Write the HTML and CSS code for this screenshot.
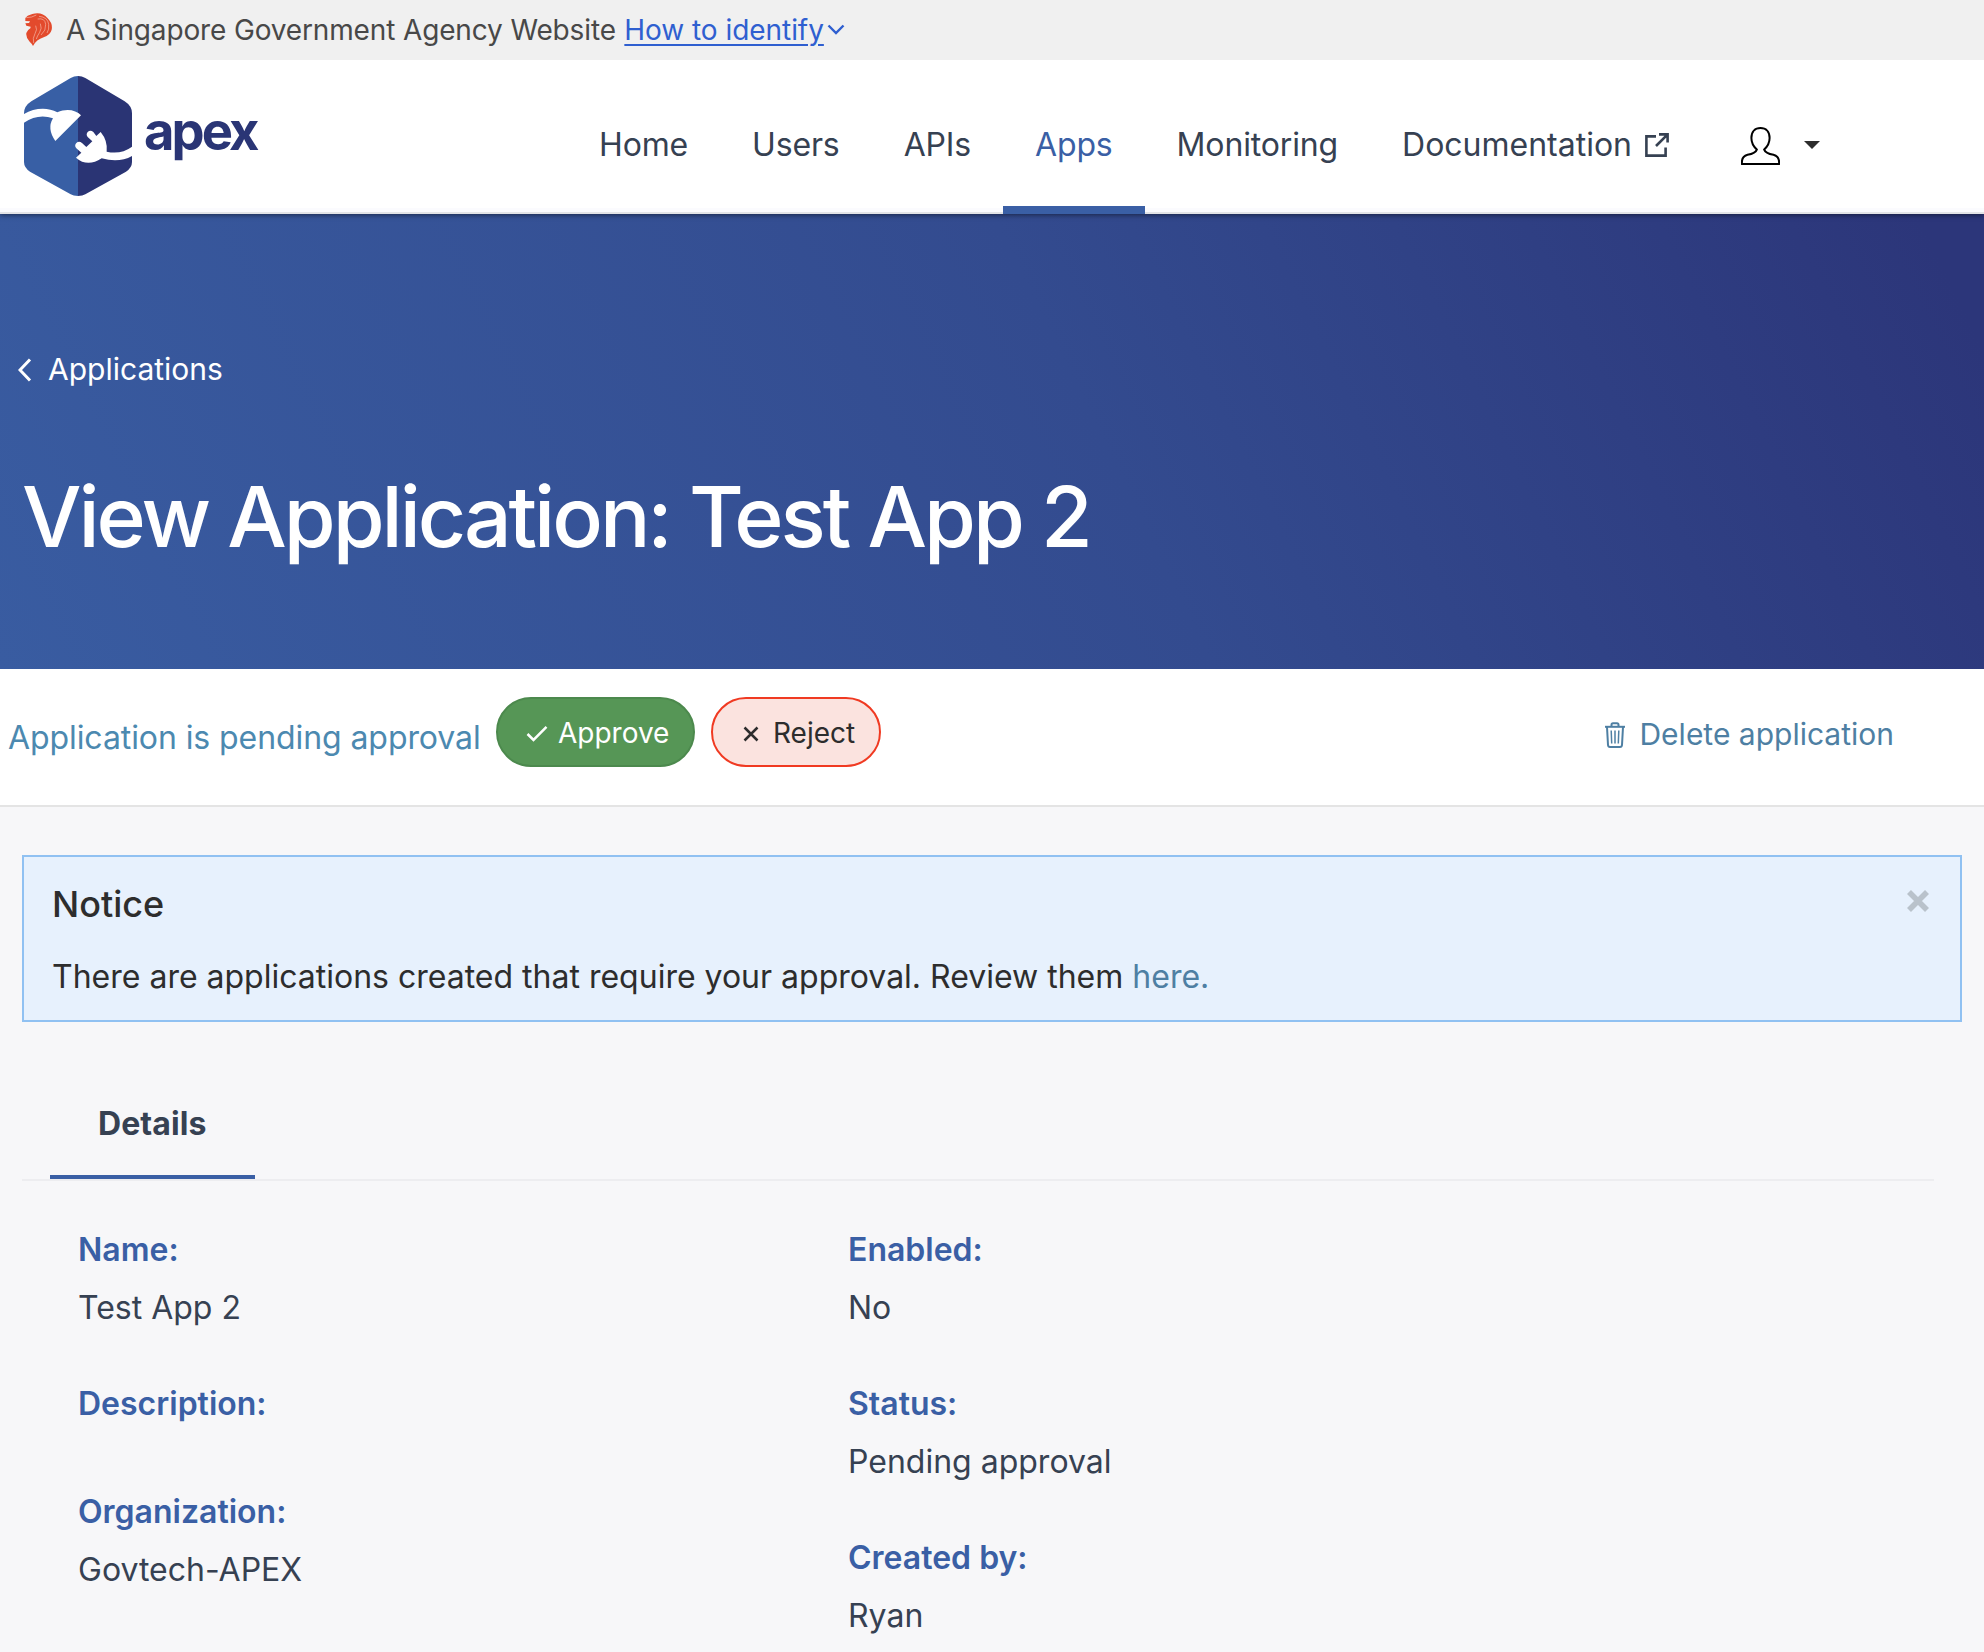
FILE: index.html
```html
<!DOCTYPE html>
<html lang="en">
<head>
<meta charset="utf-8">
<title>View Application: Test App 2</title>
<link rel="stylesheet" href="styles.css">
</head>
<body>
<div class="gov-banner">
  <svg class="lion" viewBox="0 0 81 99" aria-hidden="true">
    <path fill="#e34a2c" d="M8 8 L22 3 Q50 -5 68 16 Q84 32 80 50 Q76 66 56 73 Q34 80 24 99 Q21 92 14 86 Q2 74 4 60 Q6 52 16 46 L17 41 L4 38 L1 31 L12 30 L15 25 L1 24 L1 15Z"/>
    <g fill="none" stroke="#f6c6ba" stroke-width="1.8">
      <path d="M4 14 L20 12 L34 6 M32 38 Q38 50 30 62 Q22 76 26 90 M46 32 Q52 46 44 58 Q36 70 34 78 M38 18 Q60 14 62 34 Q64 52 48 66 M42 10 Q68 12 71 34 Q73 50 66 60"/>
    </g>
  </svg>
  <span class="gov-text">A Singapore Government Agency Website</span>
  <a class="gov-link" href="#">How to identify</a>
  <svg class="gov-chevron" viewBox="0 0 18 12" aria-hidden="true"><path d="M1.5 1.5 L9 9 L16.5 1.5" fill="none" stroke="#2f5fd0" stroke-width="2.4"/></svg>
</div>

<header class="site-header">
  <a class="brand" href="#">
    <svg class="brand-mark" viewBox="0 0 324 360" aria-hidden="true">
      <path fill="#385fa5" d="M162 0 Q150 0 140 6 L22 76 Q0 90 0 112 V258 Q0 275 18 287 L140 355 Q148 360 162 360Z"/>
      <path fill="#2a3474" d="M162 0 Q174 0 184 6 L302 76 Q324 90 324 112 V258 Q324 275 306 287 L184 355 Q176 360 162 360Z"/>
      <path fill="#fff" d="M0 114 C30 96 70 92 100 109 C128 96 156 102 171 118 L94 195 Q68 158 87 127 Q42 112 0 140Z"/>
      <path fill="#fff" d="M230 168 Q252 195 248 227 Q290 237 324 212 V240 Q285 262 233 247 Q190 275 156 245 L172 230 L157 217 Q150 209 157 201 Q165 194 174 201 L187 213 L205 196 L191 183 Q185 175 191 168 Q199 161 208 168 L217 180Z"/>
    </svg>
    <span class="brand-name">apex</span>
  </a>
  <nav class="main-nav">
    <a class="nav-link" href="#">Home</a>
    <a class="nav-link" href="#">Users</a>
    <a class="nav-link" href="#">APIs</a>
    <a class="nav-link is-active" href="#">Apps</a>
    <a class="nav-link" href="#">Monitoring</a>
    <a class="nav-link is-external" href="#">Documentation<svg class="external" viewBox="0 0 24 24" aria-hidden="true"><path d="M11 3.4 H1.4 V22.6 H20.6 V14.5 M14 1.4 H22.6 V9.5 M22.4 1.6 L11 13" fill="none" stroke="#364152" stroke-width="2.6"/></svg></a>
  </nav>
  <button class="user-menu" type="button" aria-label="Account">
    <svg class="user-icon" viewBox="0 0 39 38" aria-hidden="true"><path d="M1 37 H38 C38.6 32 37 29 32.5 27.8 C27 26.8 24 25 23.2 22.6 C26.5 19.5 28.6 15 28.6 11 C28.6 4.500 25 1 19.500 1 C14 1 10.400 4.500 10.400 11 C10.400 15 12.500 19.500 15.800 22.600 C15 25 12 26.800 6.500 27.800 C2 29 .4 32 1 37Z" fill="none" stroke="#000" stroke-width="2"/></svg>
    <svg class="caret" viewBox="0 0 16 8" aria-hidden="true"><path d="M0 0H16L8 8Z" fill="#2d2d2d"/></svg>
  </button>
</header>

<section class="hero">
  <a class="back-link" href="#"><svg class="back-icon" viewBox="0 0 14 24" aria-hidden="true"><path d="M12 1.500 L2 12 L12 22.500" fill="none" stroke="#fff" stroke-width="3"/></svg>Applications</a>
  <h1 class="page-title">View Application: Test App 2</h1>
</section>

<section class="action-bar">
  <p class="status-text">Application is pending approval</p>
  <button class="btn btn-approve" type="button"><svg class="check" viewBox="0 0 22 18" aria-hidden="true"><path d="M1.500 9 L7.500 15 L20.500 1.800" fill="none" stroke="#fff" stroke-width="2.500"/></svg>Approve</button>
  <button class="btn btn-reject" type="button"><svg class="cross" viewBox="0 0 16 16" aria-hidden="true"><path d="M1.500 1.500 L14.500 14.500 M14.500 1.500 L1.500 14.500" fill="none" stroke="#2d2d2d" stroke-width="2.500"/></svg>Reject</button>
  <a class="delete-link" href="#"><svg class="trash" viewBox="0 0 20 26" aria-hidden="true"><g fill="none" stroke="#4e7fa3"><path d="M0 4.800H20" stroke-width="2"/><path d="M6.500 4.500 V2.800 Q6.500 1.200 8 1.200 H12 Q13.500 1.200 13.500 2.800 V4.500 M2 5 L3 23 Q3.200 25 5 25 H15 Q16.800 25 17 23 L18 5" stroke-width="2"/><path d="M6.200 8.500 L6.700 21.500 M10 8.500 V21.500 M13.800 8.500 L13.300 21.500" stroke-width="1.500"/></g></svg>Delete application</a>
</section>

<main class="content">
  <section class="notice">
    <div class="notice-body">
      <h2 class="notice-title">Notice</h2>
      <p class="notice-text">There are applications created that require your approval. Review them <a href="#">here.</a></p>
    </div>
    <button class="notice-close" type="button" aria-label="Close"><svg class="close-icon" viewBox="0 0 22 22" aria-hidden="true"><path d="M2 2 L20 20 M20 2 L2 20" fill="none" stroke="#b9c2cb" stroke-width="5.600"/></svg></button>
  </section>

  <div class="tabs"><a class="tab" href="#">Details</a></div>

  <div class="details">
    <dl class="column">
      <div class="item"><dt>Name:</dt><dd>Test App 2</dd></div>
      <div class="item"><dt>Description:</dt><dd></dd></div>
      <div class="item"><dt>Organization:</dt><dd>Govtech-APEX</dd></div>
    </dl>
    <dl class="column">
      <div class="item"><dt>Enabled:</dt><dd>No</dd></div>
      <div class="item"><dt>Status:</dt><dd>Pending approval</dd></div>
      <div class="item"><dt>Created by:</dt><dd>Ryan</dd></div>
    </dl>
  </div>
</main>
</body>
</html>
```
FILE: styles.css
```css
* { box-sizing: border-box; }

html { overflow: hidden; }

body {
  margin: 0;
  height: 1652px;
  overflow: hidden;
  background: #f7f7f9;
  color: #364152;
  font: 400 32px/40px Inter, "Liberation Sans", sans-serif;
}

h1, h2, p, dl, dd { margin: 0; }
a { color: inherit; text-decoration: none; }
button { font: inherit; color: inherit; background: none; border: 0; padding: 0; }
svg { display: block; flex: none; }

/* Government banner */
.gov-banner {
  display: flex;
  height: 60px;
  padding-left: 25px;
  background: #f0f0f0;
  color: #484848;
  font-size: 28px;
  line-height: 60px;
}
.lion { width: 27px; height: 33px; margin: 13px 14px 0 0; }
.gov-text { letter-spacing: -0.14px; }
.gov-link {
  margin-left: 8.5px;
  color: #2f5fd0;
  letter-spacing: -0.05px;
  text-decoration: underline;
  text-decoration-thickness: 2px;
  text-underline-offset: 4px;
}
.gov-chevron { width: 18px; height: 12px; margin: 24px 0 0 3px; }

/* Header */
.site-header {
  position: relative;
  display: flex;
  height: 154px;
  background: linear-gradient(#fff 148px, #fbfbfe 148px, #fbfbfe 152px, #e3e4e7 152px);
  box-shadow: 0 1px 5px rgba(0, 0, 0, 0.5);
  clip-path: inset(0 0 -10px);
}
.brand { display: flex; flex: 0 0 567px; padding: 16px 0 0 24px; }
.brand-mark { width: 108px; height: 120px; }
.brand-name {
  margin: 15px 0 0 12px;
  color: #2a3575;
  font-size: 52.5px;
  font-weight: 650;
  line-height: 80px;
  letter-spacing: -2.9px;
}
.main-nav { display: flex; letter-spacing: -0.15px; }
.nav-link {
  display: flex;
  height: 154px;
  padding: 65px 32px 0;
  border-bottom: 8px solid transparent;
}
.nav-link.is-active { color: #3a5fa5; border-color: #3a5fa5; }
.nav-link.is-external { letter-spacing: 0; }
.external { width: 24px; height: 24px; margin: 8px 0 0 13px; }
.user-menu { display: flex; align-items: flex-start; padding: 67px 0 0 40px; }
.user-icon { width: 39px; height: 38px; }
.caret { width: 16px; height: 8px; margin: 14px 0 0 24px; }

/* Hero */
.hero {
  height: 455px;
  padding: 135px 18px 0;
  background: linear-gradient(64deg, #395ca1 0%, #334b8f 55%, #2c367a 97%);
  color: #fff;
}
.back-link { display: flex; font-size: 30px; }
.back-icon { width: 14px; height: 24px; margin: 9px 16px 0 0; }
.page-title {
  margin: 78px 0 0 4px;
  font-size: 84px;
  font-weight: 500;
  line-height: 100px;
  letter-spacing: -3.07px;
}

/* Action bar */
.action-bar {
  display: flex;
  align-items: flex-start;
  height: 138px;
  padding: 28px 90px 0 8px;
  border-bottom: 2px solid #e4e4e4;
  background: #fff;
}
.status-text { width: 488px; margin-top: 21px; color: #4c89b0; letter-spacing: -0.08px; }
.btn {
  display: flex;
  height: 70px;
  padding-top: 1px;
  border: 2px solid;
  border-radius: 35px;
  font-size: 28px;
  line-height: 66px;
}
.btn-approve { width: 199px; padding-left: 28px; border-color: #4c894d; background: #569656; color: #fff; }
.btn-reject { width: 170px; margin-left: 16px; padding-left: 30px; border-color: #f03a22; background: #fbe3df; color: #2d2d2d; }
.check { width: 22px; height: 18px; margin: 25px 10px 0 0; }
.cross { width: 16px; height: 16px; margin: 26px 14px 0 0; }
.delete-link { display: flex; margin: 17px 0 0 auto; color: #4e7fa3; font-size: 30px; }
.trash { width: 20px; height: 26px; margin: 8px 14px 0 0; }

/* Content */
.content { padding: 48px 22px 0; }
.notice {
  display: flex;
  justify-content: space-between;
  height: 167px;
  padding: 25px 29px 0 28px;
  border: 2px solid #90c1f2;
  background: #e7f1fd;
  color: #2d2d2d;
}
.notice-title { font-size: 36px; font-weight: 500; line-height: 44px; }
.notice-text { margin-top: 31px; }
.notice-text a { color: #4e7fa3; }
.notice-close { align-self: flex-start; padding: 8px 2px 0 0; }
.close-icon { width: 22px; height: 22px; }

.tabs {
  display: flex;
  margin: 82px 28px 0 0;
  padding-left: 28px;
  border-bottom: 2px solid #ededf0;
}
.tab {
  padding: 0 48px 31px;
  border-bottom: 4px solid #3a5fa5;
  font-weight: 700;
  letter-spacing: 0.1px;
}

.details { display: grid; grid-template-columns: 770px 1fr; padding: 49px 0 0 56px; }
.item { display: flex; flex-direction: column; margin-bottom: 53px; }
.item dt { margin-bottom: 15px; color: #3a5fa5; font-weight: 600; }
.item dd { line-height: 46px; }
```
